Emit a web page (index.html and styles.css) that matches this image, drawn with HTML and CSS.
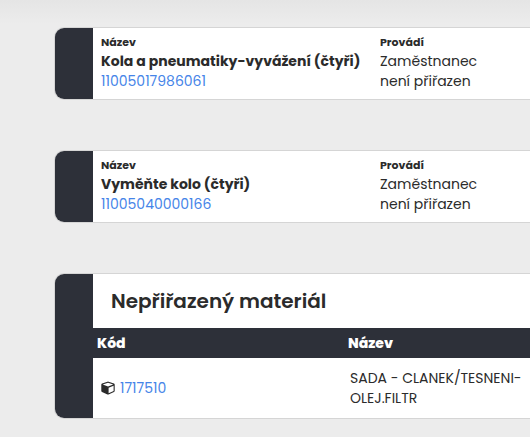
FILE: index.html
```
<!DOCTYPE html>
<html lang="cs">
<head>
    <meta charset="UTF-8">
    <meta name="viewport" content="width=device-width, initial-scale=1.0">
    <title>Nepřiřazený materiál</title>
    <link rel="stylesheet" href="styles.css">
</head>
<body>
    <main class="container">
        <section class="card">
            <div class="card-side"></div>
            <div class="job">
                <div class="job-column">
                    <h3 class="label">Název</h3>
                    <p class="job-title">Kola a pneumatiky-vyvážení (čtyři)</p>
                    <a class="code" href="#">11005017986061</a>
                </div>
                <div class="job-column">
                    <h3 class="label">Provádí</h3>
                    <p>Zaměstnanec<br>není přiřazen</p>
                </div>
            </div>
        </section>

        <section class="card">
            <div class="card-side"></div>
            <div class="job">
                <div class="job-column">
                    <h3 class="label">Název</h3>
                    <p class="job-title">Vyměňte kolo (čtyři)</p>
                    <a class="code" href="#">11005040000166</a>
                </div>
                <div class="job-column">
                    <h3 class="label">Provádí</h3>
                    <p>Zaměstnanec<br>není přiřazen</p>
                </div>
            </div>
        </section>

        <section class="card">
            <div class="card-side"></div>
            <div class="card-body">
                <h2>Nepřiřazený materiál</h2>
                <table class="material">
                    <thead>
                        <tr>
                            <th class="col-code" scope="col">Kód</th>
                            <th scope="col">Název</th>
                        </tr>
                    </thead>
                    <tbody>
                        <tr>
                            <td>
                                <a class="code item" href="#">
                                    <svg class="box-icon" viewBox="0 0 14 14" aria-hidden="true">
                                        <path fill="#2b2b2b" fill-rule="evenodd" d="M6.5 .7Q7 .5 7.5 .7L13 2.6Q13.7 2.9 13.7 3.6V10Q13.7 10.7 13 11L7.5 13.4Q7 13.6 6.5 13.4L1 11Q.3 10.7 .3 10V3.6Q.3 2.9 1 2.6ZM7 1.7L1.7 3.5L7 5.6L12.3 3.5ZM7.6 6.7V12.2L12.6 10V4.7Z"/>
                                    </svg>
                                    1717510
                                </a>
                            </td>
                            <td>SADA - CLANEK/TESNENI-<br>OLEJ.FILTR</td>
                        </tr>
                    </tbody>
                </table>
            </div>
        </section>
    </main>
</body>
</html>
```
FILE: styles.css
```
* {
    margin: 0;
    padding: 0;
    box-sizing: border-box;
}

body {
    font-family: Poppins, Inter, "Open Sans", sans-serif;
    font-size: 14px;
    line-height: 20px;
    color: #2b2b2b;
    background: #ececec linear-gradient(#e5e5e5, #ececec) no-repeat 0 0 / 100% 24px;
}

.container {
    display: flex;
    flex-direction: column;
    gap: 50px;
    padding: 27px 0 18px 54px;
}

.card {
    display: flex;
    background: white;
    border: 1px solid #d5d5d5;
    border-right: none;
    border-radius: 10px 0 0 10px;
    overflow: hidden;
}

.card-side {
    flex: none;
    width: 38px;
    background: #2d3039;
}

.card-body {
    flex: 1;
}

.job {
    flex: 1;
    display: grid;
    grid-template-columns: 279px 1fr;
    padding: 7px 0 8px 8px;
}

.label {
    padding-bottom: 2px;
    font-size: 11px;
    line-height: 14px;
    font-weight: 700;
}

.job-title {
    font-weight: 700;
    white-space: nowrap;
}

.code {
    color: #4584e8;
    text-decoration: none;
}

h2 {
    padding: 12px 18px;
    font-size: 20px;
    line-height: 30px;
    font-weight: 600;
}

.material {
    width: 100%;
    border-collapse: collapse;
    text-align: left;
}

.material th {
    padding: 5px 4px;
    color: white;
    background: #2d3039;
    font-weight: 800;
}

.material .col-code {
    width: 251px;
}

.material td {
    padding: 10px 0 10px 8px;
}

.material td + td {
    padding-left: 6px;
}

.item {
    display: flex;
    align-items: center;
    gap: 5px;
}

.box-icon {
    width: 14px;
    height: 14px;
}
```
